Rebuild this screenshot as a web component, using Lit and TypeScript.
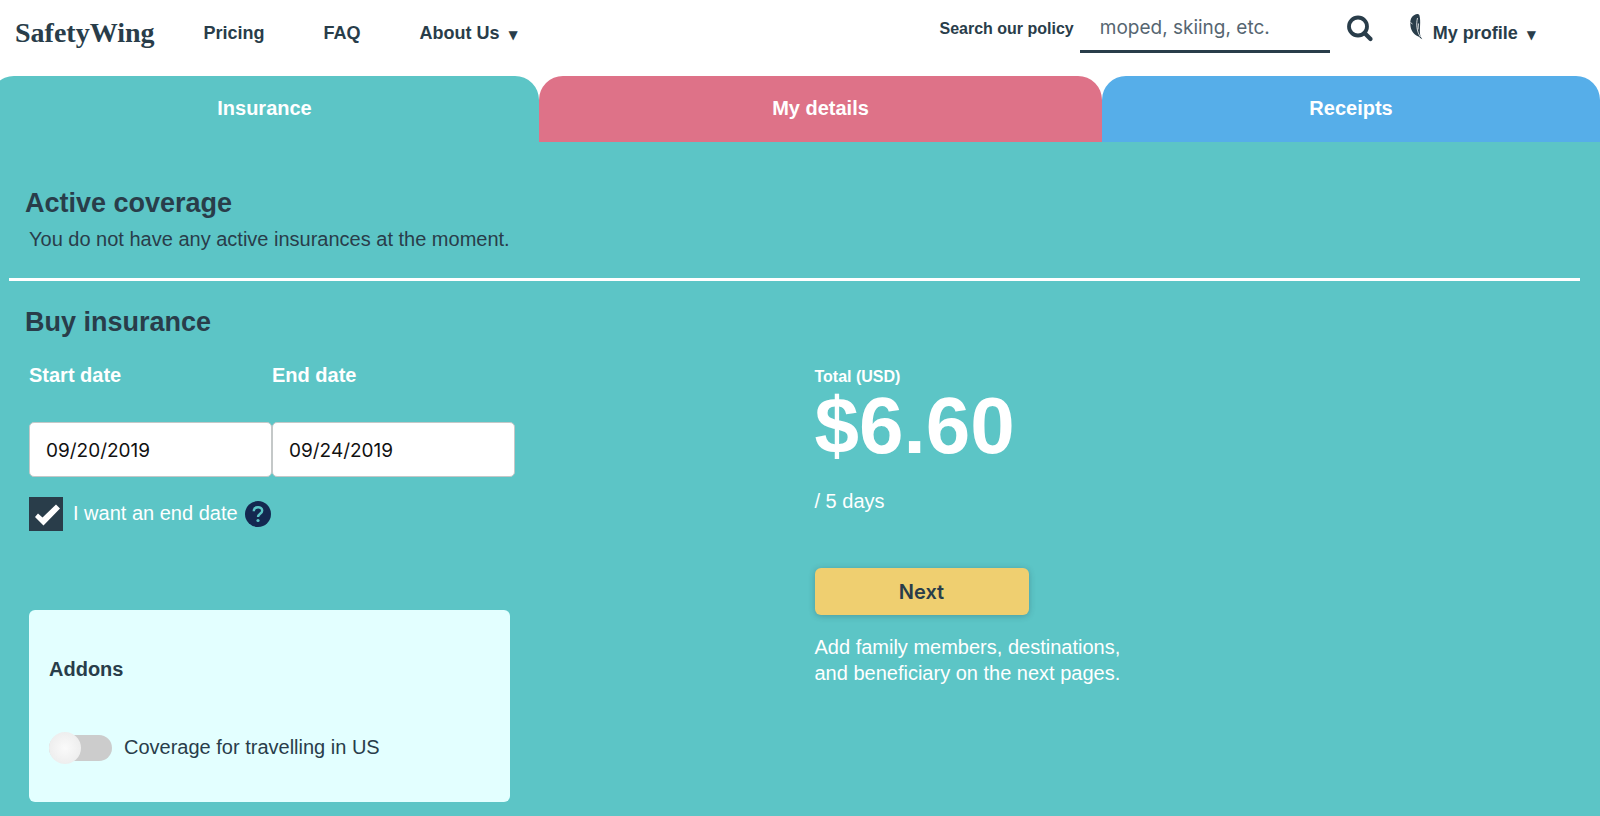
import { LitElement, html, css } from "lit";
import { customElement, state } from "lit/decorators.js";

@customElement("app-root")
export class AppRoot extends LitElement {
  @state() private wantsEndDate = true;

  static styles = css`
    :host {
      display: flex;
      flex-direction: column;
      min-height: 100vh;
      overflow: hidden;
      background: #fff;
      color: #293d4a;
      font: 20px/26px "Liberation Sans", Arial, sans-serif;
    }
    * { box-sizing: border-box; }
    a { color: inherit; text-decoration: none; }
    h2, p { margin: 0; }

    header {
      display: flex;
      align-items: center;
      justify-content: space-between;
      height: 76px;
      padding: 0 64px 10px 15px;
    }
    nav { display: flex; align-items: center; gap: 59px; font-size: 18px; font-weight: bold; }
    .logo {
      margin-right: -10px;
      font: bold 28px/32px "Liberation Serif", "Times New Roman", serif;
    }
    .caret { margin-left: 4px; font: 12px "DejaVu Sans", sans-serif; }
    .tools { display: flex; align-items: center; }
    .search { display: flex; align-items: center; padding-bottom: 13px; }
    .search label { font-size: 16px; font-weight: bold; }
    .search input {
      width: 250px;
      height: 52px;
      margin-left: 6px;
      padding: 4px 20px 0;
      border: 0;
      border-bottom: 3px solid #293d4a;
      background: none;
      color: inherit;
      font: 19px Inter, sans-serif;
    }
    .search input::placeholder { color: #566671; opacity: 1; }
    .search label, .icon-button { padding-top: 4px; }
    .icon-button { margin-left: 16px; border: 0; padding-inline: 0; background: none; color: inherit; line-height: 0; }
    .profile { display: flex; gap: 9px; margin-left: 36px; font-size: 18px; font-weight: bold; }
    .feather { margin-top: -6px; }

    .tabs {
      display: grid;
      grid-template-columns: 549fr 563fr 498fr;
      margin-left: -10px;
      line-height: 64px;
      text-align: center;
      font-weight: bold;
      color: #fff;
    }
    .tab { height: 66px; border-radius: 24px 24px 0 0; }
    .teal { background: #5cc5c6; }
    .pink { background: #de7288; }
    .blue { background: #56aee9; }

    main { flex: 1; padding: 44px 20px 15px 9px; background: #5cc5c6; }
    h2 { padding-left: 16px; font-size: 27px; line-height: 34px; }
    .status { padding: 6px 20px 26px; border-bottom: 3px solid #fff; }
    .buy { padding-top: 24px; }
    .columns { display: grid; grid-template-columns: 1fr 1fr; margin: 23px -20px 0 20px; color: #fff; }

    .dates { display: flex; }
    .field { display: flex; flex-direction: column; gap: 34px; font-weight: bold; }
    .field input {
      width: 243px;
      height: 55px;
      padding: 1px 16px 0;
      border: 1px solid #c4c8c8;
      border-radius: 5px;
      background: #fff;
      color: #111;
      font: 19px Inter, sans-serif;
    }
    .check { display: flex; align-items: center; margin-top: 20px; }
    .check label { display: flex; align-items: center; gap: 10px; }
    .label-text { padding-bottom: 3px; }
    .check input {
      appearance: none;
      width: 34px;
      height: 34px;
      margin: 0;
      background: #293d4a;
    }
    .check input:checked {
      background: #293d4a url("data:image/svg+xml,%3Csvg xmlns='http://www.w3.org/2000/svg' viewBox='0 0 34 34'%3E%3Cpath d='M6 20l3-3.500 4.500 4L27 7.500l4 4L14.500 28.500z' fill='white'/%3E%3C/svg%3E");
    }
    .help { margin: 0 0 0 7px; padding: 0; border: 0; background: none; line-height: 0; }

    .addons {
      width: 481px;
      margin-top: 79px;
      padding: 46px 20px 38px;
      border-radius: 6px;
      background: #e3ffff;
      color: #293d4a;
    }
    .toggle-row { display: flex; align-items: center; gap: 12px; margin-top: 50px; }
    .toggle {
      appearance: none;
      display: flex;
      align-items: center;
      width: 63px;
      height: 26px;
      margin: 3px 0;
      background: #ccc;
      border-radius: 13px;
    }
    .toggle::before {
      content: "";
      flex: none;
      width: 32px;
      height: 32px;
      border-radius: 50%;
      background: radial-gradient(#fafafa, #e9e9e9);
    }
    .toggle:checked { justify-content: flex-end; }

    .total { display: flex; flex-direction: column; align-items: flex-start; padding-top: 5px; }
    .caption { font-size: 16px; line-height: 20px; font-weight: bold; }
    .price { font-size: 80px; line-height: 78px; font-weight: bold; }
    .days { margin-top: 23px; }
    .next {
      width: 214px;
      height: 47px;
      margin: 54px 0 19px;
      border: 0;
      border-radius: 6px;
      background: #efcf70;
      box-shadow: 0 1px 6px rgba(41, 61, 74, 0.3);
      color: #293d4a;
      font: 600 20px Inter, sans-serif;
    }
  `;

  private toggleEndDate(event: Event) {
    this.wantsEndDate = (event.target as HTMLInputElement).checked;
  }

  render() {
    return html`
      <header>
        <nav>
          <a class="logo" href="#">SafetyWing</a>
          <a href="#pricing">Pricing</a>
          <a href="#faq">FAQ</a>
          <a href="#about">About Us <span class="caret">▼</span></a>
        </nav>
        <div class="tools">
          <form class="search" @submit=${(e: Event) => e.preventDefault()}>
            <label for="policy">Search our policy</label>
            <input id="policy" type="text" placeholder="moped, skiing, etc." />
            <button class="icon-button" aria-label="Search">
              <svg width="28" height="28" viewBox="0 0 28 28" fill="none" stroke="currentColor">
                <circle cx="12" cy="12.500" r="9" stroke-width="3.800" />
                <path d="M18.500 19L24.500 25" stroke-width="4.200" stroke-linecap="round" />
              </svg>
            </button>
          </form>
          <a class="profile" href="#profile">
            <svg class="feather" width="14" height="26" viewBox="0 0 14 26">
              <path d="M7.500 0C3 .5.300 4 .300 9c0 6 2 10 6 12.500l3 1.500c1 1 1.500 1.500 3 2.200-1.500-2-2.300-4-2.300-6C9.500 14 11 8 9.500 1.500 9 .500 8.500 0 7.500 0z" fill="#293d4a" />
              <path d="M7.500 4C6 10 6.500 17 10.500 23M.500 8.500l2 1.500M8.500 9.500l-.500 6" stroke="#fff" stroke-width=".8" fill="none" />
            </svg>
            <span>My profile <span class="caret">▼</span></span>
          </a>
        </div>
      </header>

      <div class="tabs">
        <a class="tab teal" href="#insurance">Insurance</a>
        <a class="tab pink" href="#details">My details</a>
        <a class="tab blue" href="#receipts">Receipts</a>
      </div>

      <main>
        <section>
          <h2>Active coverage</h2>
          <p class="status">You do not have any active insurances at the moment.</p>
        </section>
        <section class="buy">
          <h2>Buy insurance</h2>
          <div class="columns">
            <div>
              <div class="dates">
                <label class="field">Start date <input type="text" .value=${"09/20/2019"} /></label>
                <label class="field">End date
                  <input type="text" .value=${"09/24/2019"} ?disabled=${!this.wantsEndDate} />
                </label>
              </div>
              <div class="check">
                <label>
                  <input type="checkbox" .checked=${this.wantsEndDate} @change=${this.toggleEndDate} />
                  <span class="label-text">I want an end date</span>
                </label>
                <button class="help" aria-label="Help">
                  <svg width="26" height="26" viewBox="0 0 26 26">
                    <circle cx="13" cy="13" r="13" fill="#142850" />
                    <path d="M8.800 10.200c0-5.200 8.400-5.200 8.400-.5 0 3-4.200 3.200-4.200 6.300" fill="none" stroke="#5cc5c6" stroke-width="2.400" />
                    <circle cx="13" cy="19.500" r="1.600" fill="#5cc5c6" />
                  </svg>
                </button>
              </div>
              <div class="addons">
                <strong>Addons</strong>
                <label class="toggle-row">
                  <input class="toggle" type="checkbox" role="switch" />
                  <span class="label-text">Coverage for travelling in US</span>
                </label>
              </div>
            </div>
            <div class="total">
              <span class="caption">Total (USD)</span>
              <span class="price">$6.60</span>
              <span class="days">/ 5 days</span>
              <button class="next">Next</button>
              <p>Add family members, destinations,<br />and beneficiary on the next pages.</p>
            </div>
          </div>
        </section>
      </main>
    `;
  }
}
